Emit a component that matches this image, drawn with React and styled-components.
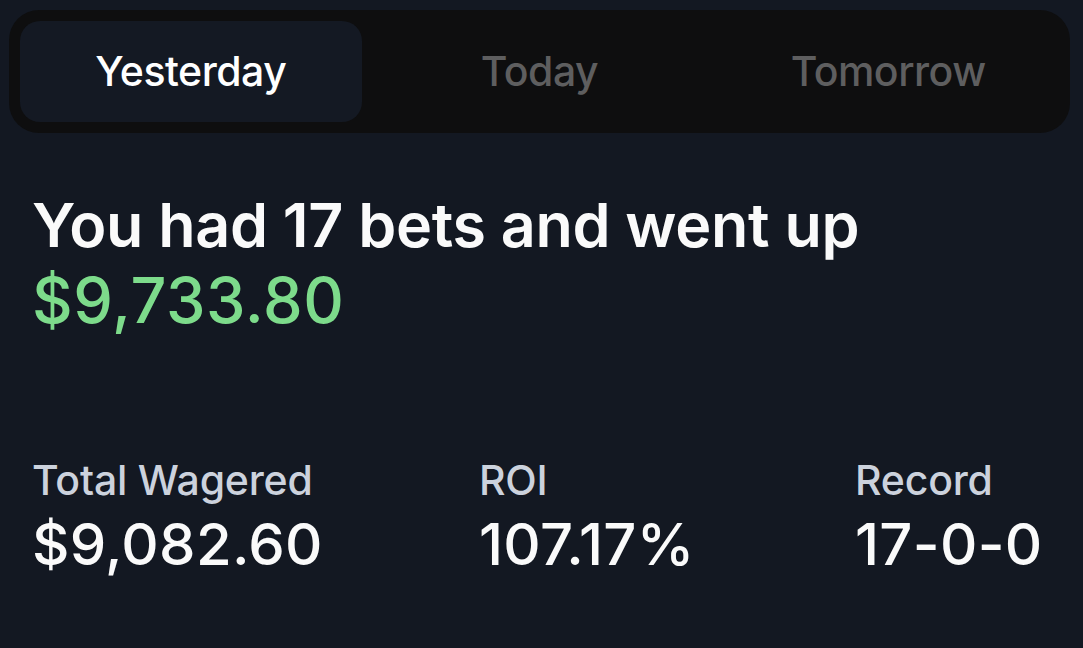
import React, { useState } from "react";
import styled, { createGlobalStyle } from "styled-components";

const GlobalStyle = createGlobalStyle`
  html, body {
    margin: 0;
    padding: 0;
    background: #131822;
  }
  * {
    box-sizing: border-box;
  }
`;

const Screen = styled.div`
  width: 1083px;
  height: 648px;
  overflow: hidden;
  background: #131822;
  font-family: Inter, "Noto Sans", "Liberation Sans", sans-serif;
  padding: 10px 13px 0 9px;
`;

const TabBar = styled.div`
  display: grid;
  grid-template-columns: repeat(3, 1fr);
  gap: 7px;
  height: 123px;
  padding: 11px;
  background: #0e0e0f;
  border-radius: 30px;
`;

const Tab = styled.button`
  border: none;
  outline: none;
  cursor: pointer;
  font-family: inherit;
  font-size: 41px;
  font-weight: 500;
  letter-spacing: -0.5px;
  color: ${(p) => (p.$active ? "#ffffff" : "#5e5e5f")};
  background: ${(p) => (p.$active ? "#141923" : "transparent")};
  border-radius: 20px;
  display: flex;
  align-items: center;
  justify-content: center;
  padding-bottom: 2px;
`;

const Summary = styled.div`
  margin-top: 55px;
  padding-left: 23px;
`;

const Headline = styled.div`
  font-size: 61px;
  line-height: 75px;
  font-weight: 600;
  letter-spacing: -0.3px;
  color: #fafafa;
`;

const Amount = styled.div`
  font-size: 63px;
  line-height: 75px;
  font-weight: 500;
  letter-spacing: 0.6px;
  color: ${(p) => p.$color};
`;

const Stats = styled.div`
  display: grid;
  grid-template-columns: 447px 376px 1fr;
  margin-top: 118px;
  padding-left: 23px;
`;

const Stat = styled.div`
  display: flex;
  flex-direction: column;
  gap: 8px;
`;

const Label = styled.div`
  font-size: 41px;
  line-height: 48px;
  font-weight: 500;
  letter-spacing: -0.2px;
  color: #ccd2dd;
`;

const Value = styled.div`
  font-size: 58px;
  line-height: 64px;
  font-weight: 500;
  letter-spacing: 0.3px;
  color: #fafafa;
`;

const tabs = ["Yesterday", "Today", "Tomorrow"];

const stats = [
  { label: "Total Wagered", value: "$9,082.60" },
  { label: "ROI", value: "107.17%" },
  { label: "Record", value: "17-0-0" },
];

export default function App() {
  const [active, setActive] = useState("Yesterday");
  return (
    <>
      <GlobalStyle />
      <Screen>
        <TabBar>
          {tabs.map((t) => (
            <Tab key={t} $active={t === active} onClick={() => setActive(t)}>
              {t}
            </Tab>
          ))}
        </TabBar>
        <Summary>
          <Headline>You had 17 bets and went up</Headline>
          <Amount $color="#7ddb8b">$9,733.80</Amount>
        </Summary>
        <Stats>
          {stats.map((s) => (
            <Stat key={s.label}>
              <Label>{s.label}</Label>
              <Value>{s.value}</Value>
            </Stat>
          ))}
        </Stats>
      </Screen>
    </>
  );
}
